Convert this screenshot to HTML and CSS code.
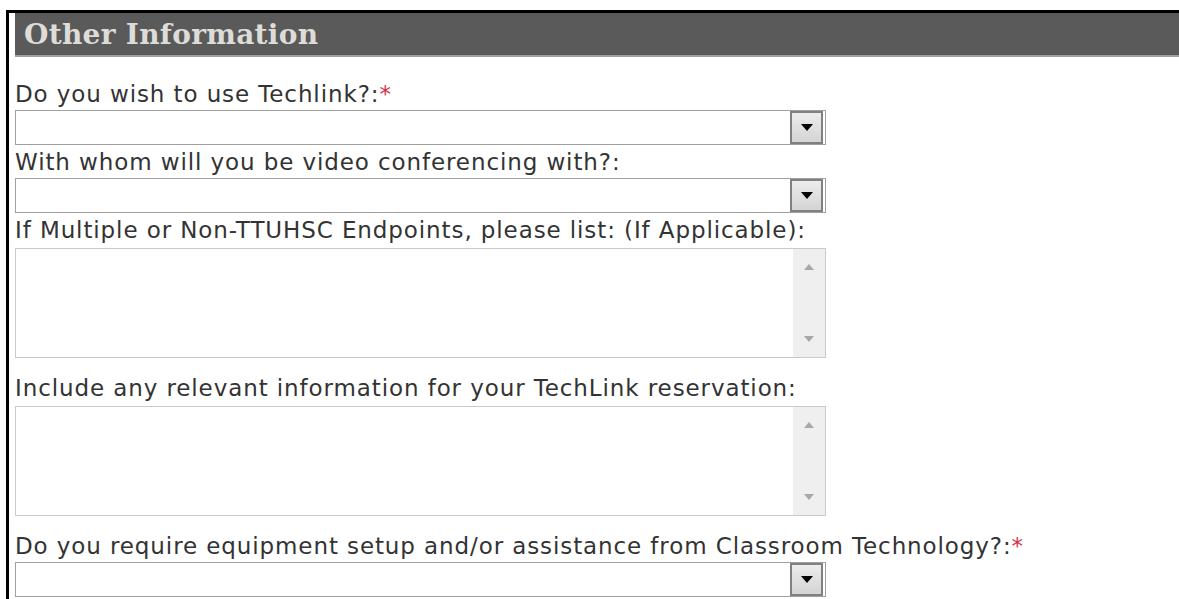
FILE: index.html
```html
<!DOCTYPE html>
<html lang="en">
<head>
<meta charset="utf-8">
<title>Other Information</title>
<link rel="stylesheet" href="styles.css">
</head>
<body>
<div class="frame">
  <div class="section-head">Other Information</div>
  <div class="form">
    <div class="field">
      <div class="label">Do you wish to use Techlink?:<span class="req">*</span></div>
      <div class="select"><span class="select-btn"><svg width="12" height="7" viewBox="0 0 12 7"><path d="M0 0h12L6 7z" fill="#000"/></svg></span></div>
    </div>
    <div class="field">
      <div class="label">With whom will you be video conferencing with?:</div>
      <div class="select"><span class="select-btn"><svg width="12" height="7" viewBox="0 0 12 7"><path d="M0 0h12L6 7z" fill="#000"/></svg></span></div>
    </div>
    <div class="field field-text">
      <div class="label">If Multiple or Non-TTUHSC Endpoints, please list: (If Applicable):</div>
      <div class="textarea">
        <div class="scroll">
          <svg width="10" height="6" viewBox="0 0 10 6"><path d="M0 6h10L5 0z" fill="#a8a8a8"/></svg>
          <svg width="10" height="6" viewBox="0 0 10 6"><path d="M0 0h10L5 6z" fill="#a8a8a8"/></svg>
        </div>
      </div>
    </div>
    <div class="field field-text">
      <div class="label">Include any relevant information for your TechLink reservation:</div>
      <div class="textarea">
        <div class="scroll">
          <svg width="10" height="6" viewBox="0 0 10 6"><path d="M0 6h10L5 0z" fill="#a8a8a8"/></svg>
          <svg width="10" height="6" viewBox="0 0 10 6"><path d="M0 0h10L5 6z" fill="#a8a8a8"/></svg>
        </div>
      </div>
    </div>
    <div class="field">
      <div class="label">Do you require equipment setup and/or assistance from Classroom Technology?:<span class="req">*</span></div>
      <div class="select"><span class="select-btn"><svg width="12" height="7" viewBox="0 0 12 7"><path d="M0 0h12L6 7z" fill="#000"/></svg></span></div>
    </div>
  </div>
</div>
</body>
</html>
```

FILE: styles.css
```css
html, body {
  margin: 0;
  padding: 0;
  background: #fff;
  height: 100%;
  overflow: hidden;
}

.frame {
  box-sizing: border-box;
  height: calc(100% - 10px);
  overflow: hidden;
  margin: 10px 0 0 6px;
  border-left: 3px solid #000;
  border-top: 3px solid #000;
  padding-left: 6px;
}

.section-head {
  height: 42px;
  line-height: 43px;
  padding-left: 9px;
  background: #5a5a5a;
  border-bottom: 2px solid #a0a0a0;
  color: #dedcd8;
  font-family: "DejaVu Serif", "Liberation Serif", serif;
  font-weight: bold;
  font-size: 28px;
  letter-spacing: 0.3px;
  white-space: nowrap;
}

.form {
  padding-top: 24px;
  width: 811px;
}

.field {
  margin-bottom: 4px;
}

.field-text {
  margin-bottom: 17px;
}

.label {
  font-family: "DejaVu Sans", Verdana, sans-serif;
  font-size: 23px;
  letter-spacing: 0.9px;
  line-height: 26px;
  color: #333;
  white-space: nowrap;
  margin-bottom: 3px;
}

.field-text .label {
  margin-bottom: 5px;
}

.req {
  color: #d0334a;
}

.select {
  box-sizing: border-box;
  height: 35px;
  border: 1px solid #a0a0a0;
  background: #fff;
  display: flex;
  justify-content: flex-end;
  align-items: center;
  padding-right: 2px;
}

.select-btn {
  width: 33px;
  height: 33px;
  box-sizing: border-box;
  border: 2px solid #808080;
  background: linear-gradient(#ececec, #d4d4d4);
  display: flex;
  align-items: center;
  justify-content: center;
}

.textarea {
  box-sizing: border-box;
  height: 110px;
  border: 1px solid #cacaca;
  background: #fff;
  display: flex;
  justify-content: flex-end;
}

.scroll {
  width: 32px;
  background: #efefef;
  display: flex;
  flex-direction: column;
  justify-content: space-between;
  align-items: center;
  padding: 15px 0;
}
```
